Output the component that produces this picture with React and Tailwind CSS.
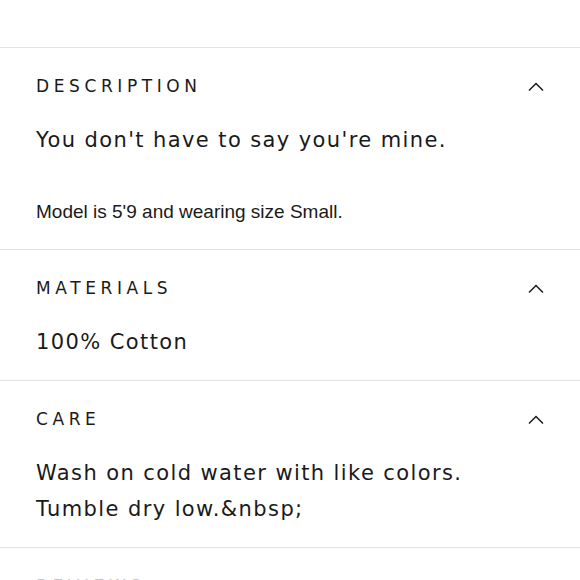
import React from 'react';

const wide = { fontFamily: '"DejaVu Sans", Verdana, sans-serif' };

function Chevron() {
  return (
    <svg width="16" height="10" viewBox="0 0 16 10" fill="none" className="shrink-0">
      <path d="M1 8.5 L8 1.5 L15 8.5" stroke="#1a1a1a" strokeWidth="1.5" />
    </svg>
  );
}

function Section({ title, muted, children }) {
  return (
    <section className="border-t border-[#e3e3e3] pl-9 pr-[36px] pt-[27px] pb-[20px]">
      <div className="flex h-6 items-center justify-between">
        <h3
          style={wide}
          className={muted ? 'text-[17px] tracking-[4.6px] text-[#c4c4c4]' : 'text-[17px] tracking-[4.6px] text-[#1a1a1a]'}
        >
          {title}
        </h3>
        <Chevron />
      </div>
      <div className="mt-[23px]">{children}</div>
    </section>
  );
}

export default function App() {
  return (
    <div className="h-[580px] w-[580px] overflow-hidden bg-white">
      <div className="h-[47px]" />

      <Section title="DESCRIPTION">
        <p style={wide} className="text-[21px] leading-[36px] tracking-[1.4px] text-[#1a1a1a]">
          You don't have to say you're mine.
        </p>
        <p
          style={{ fontFamily: '"Liberation Sans", Arial, sans-serif' }}
          className="mt-[37px] text-[19px] leading-[34px] text-[#1a1a1a]"
        >
          Model is 5'9 and wearing size Small.
        </p>
      </Section>

      <Section title="MATERIALS">
        <p style={wide} className="text-[21px] leading-[36px] tracking-[1.4px] text-[#1a1a1a]">
          100% Cotton
        </p>
      </Section>

      <Section title="CARE">
        <p style={wide} className="text-[21px] leading-[36px] tracking-[1.4px] text-[#1a1a1a]">
          Wash on cold water with like colors.
          <br />
          Tumble dry low.&amp;nbsp;
        </p>
      </Section>

      <Section title="REVIEWS" muted>
        <p style={wide} className="text-[21px] leading-[36px] tracking-[1.4px] text-[#1a1a1a]">
          &nbsp;
        </p>
      </Section>
    </div>
  );
}
